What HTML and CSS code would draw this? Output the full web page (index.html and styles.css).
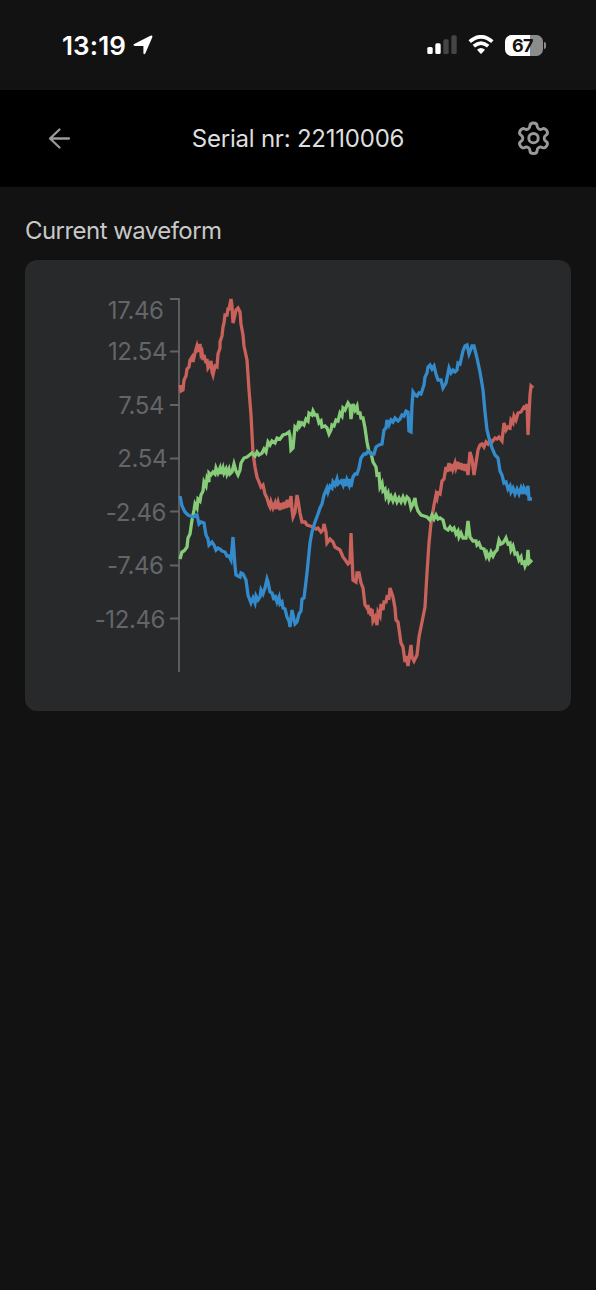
FILE: index.html
```
<!DOCTYPE html>
<html lang="en">
<head>
    <meta charset="UTF-8">
    <meta name="viewport" content="width=device-width, initial-scale=1.0">
    <title>Current waveform</title>
    <link rel="stylesheet" href="styles.css">
</head>
<body>
    <div class="status-bar">
        <div class="status-left">
            <span class="time">13:19</span>
            <svg class="location" width="20" height="20" viewBox="0 0 20 20">
                <path d="M1.2 9 L17.4 .8 Q20 0 19.2 2.4 L12.4 18.3 Q11 20.4 10.4 18.2 V11 H2 Q-.7 10.5 1.2 9 Z"/>
            </svg>
        </div>
        <div class="status-right">
            <svg class="signal" width="31" height="20" viewBox="0 0 31 20">
                <rect x="0.3" y="12" width="5.4" height="7" rx="1.6"/>
                <rect x="8.3" y="8.3" width="5.4" height="10.7" rx="1.6"/>
                <rect class="off" x="16.3" y="4.3" width="5.4" height="14.7" rx="1.6"/>
                <rect class="off" x="24.3" y="0.3" width="5.4" height="18.7" rx="1.6"/>
            </svg>
            <svg class="wifi" width="26" height="20" viewBox="0 0 26 20">
                <path class="arc" d="M1.7 6.6 Q13 -3 24.3 6.6"/>
                <path class="arc" d="M5.8 11.2 Q13 5 20.2 11.2"/>
                <path d="M9 14.7 Q13 11.3 17 14.7 L13.6 18.5 Q13 19.1 12.4 18.5 Z"/>
            </svg>
            <div class="battery"><span>67</span></div>
            <div class="battery-cap"></div>
        </div>
    </div>

    <div class="header">
        <svg class="back" width="24" height="24" viewBox="0 0 24 24">
            <path d="M22 11.5 H3 M12.5 2.5 L3 11.5 L12.5 20.5"/>
        </svg>
        <h1>Serial nr: 22110006</h1>
        <svg class="settings" width="34" height="36" viewBox="-16.5 -17.2 34 36">
            <path d="M-3.6 -12.2 C-3.6 -16.3 3.6 -16.3 3.6 -12.2
                C3.6 -9.6 6.51 -7.92 8.77 -9.22 C12.32 -11.27 15.92 -5.03 12.37 -2.98
                C10.11 -1.68 10.11 1.68 12.37 2.98 C15.92 5.03 12.32 11.27 8.77 9.22
                C6.51 7.92 3.6 9.6 3.6 12.2 C3.6 16.3 -3.6 16.3 -3.6 12.2
                C-3.6 9.6 -6.51 7.92 -8.77 9.22 C-12.32 11.27 -15.92 5.03 -12.37 2.98
                C-10.11 1.68 -10.11 -1.68 -12.37 -2.98 C-15.92 -5.03 -12.32 -11.27 -8.77 -9.22
                C-6.51 -7.92 -3.6 -9.6 -3.6 -12.2 Z"/>
            <circle r="4.7"/>
        </svg>
    </div>

    <div class="content">
        <h2>Current waveform</h2>
        <div class="card">
            <svg class="chart" viewBox="25 260 546 451">
                <path class="axis" d="M170 299 H179 V672 M170 351.5 H179 M170 405 H179 M170 458.5 H179 M170 511.5 H179 M170 565.5 H179 M170 618.5 H179"/>
                <g class="labels">
                    <text x="163.5" y="318.5">17.46</text>
                    <text x="167" y="360">12.54</text>
                    <text x="164" y="413.5">7.54</text>
                    <text x="167" y="467">2.54</text>
                    <text x="166" y="520.5">-2.46</text>
                    <text x="163.5" y="574">-7.46</text>
                    <text x="165" y="627.5">-12.46</text>
                </g>
                <polyline class="line red" points="180,385 181,391 183,390 184,380 186,376 187,369 189,367 190,360 192,357 193,362 195,353 197,346 198,350 199,349 200,344 201,354 202,352 203,360 204,355 206,363 207,359 208,368 210,365 211,361 212,372 213,375 215,366 217,367 218,354 220,348 220,342 222,336 223,327 224,323 225,315 227,315 228,309 229,309 231,299 232,306 233,323 235,315 236,310 238,308 240,312 241,324 243,335 244,346 247,360 249,390 251,415 253,453 255,467 257,477 259,482 261,487 263,485 265,494 267,498 269,505 270,507 271,502 273,508 275,503 276,509 278,502 280,510 281,503 283,509 284,502 286,508 287,500 289,507 291,496 292,510 293,517 295,512 297,495 298,500 300,513 302,522 305,522 307,525 310,526 313,527 316,529 318,528 321,532 323,530 324,524 326,532 327,543 330,539 333,542 335,547 340,550 343,557 346,561 348,564 350,562 351,533 353,580 356,582 357,573 359,573 361,583 363,588 365,605 367,608 368,605 369,614 370,608 371,616 372,609 373,621 375,617 377,625 378,612 380,616 381,604 383,610 384,602 386,602 387,597 389,598 390,588 393,597 395,608 396,620 398,622 401,643 403,647 405,662 406,656 408,666 411,645 412,657 414,661 417,655 419,637 422,622 425,607 427,573 429,543 431,523 434,505 436,495 437,498 438,493 440,494 442,481 444,479 446,467 447,472 449,463 450,471 452,464 453,469 455,463 456,468 458,462 459,469 461,463 462,470 464,464 465,471 466,464 468,475 470,452 472,459 474,475 476,463 478,450 480,445 482,444 484,447 486,442 488,444 490,440 492,442 495,438 497,439 499,437 502,441 504,423 506,430 508,427 510,428 511,420 513,423 514,416 516,420 518,413 521,412 524,407 526,408 527,404 528,435 530,395 531,386 533,388"/>
                <polyline class="line green" points="180,559 182,552 184,551 187,547 188,538 190,534 192,520 194,510 195,504 197,508 198,499 200,501 201,495 203,491 204,482 206,486 207,478 209,482 209,473 211,475 213,472 215,474 216,468 218,473 220,468 221,474 223,468 224,473 226,469 227,474 229,469 230,474 232,472 234,464 236,471 238,475 240,470 241,463 244,458 247,457 252,453 255,456 257,452 259,455 262,453 264,449 266,452 268,442 270,445 272,441 275,443 277,438 280,439 283,435 286,434 289,432 290,436 291,450 293,448 295,427 297,429 299,421 300,426 302,423 304,425 306,419 308,421 309,413 312,415 313,411 315,415 317,415 319,423 321,421 322,427 325,426 327,428 329,434 331,430 332,425 334,426 336,420 338,421 340,413 342,416 343,408 345,410 348,403 350,406 351,419 353,404 355,410 357,406 358,413 360,413 361,418 363,418 365,428 367,442 369,452 371,453 373,462 376,467 377,475 379,474 380,487 382,483 383,491 385,489 386,497 388,493 389,500 391,496 393,501 395,496 397,502 399,498 401,502 403,497 405,502 407,497 409,499 411,508 413,504 415,498 416,505 418,511 421,515 424,516 427,517 430,520 432,515 434,519 436,515 438,519 440,518 443,520 445,528 448,530 450,527 452,530 454,528 456,534 458,531 459,537 461,533 463,538 466,538 468,521 470,537 473,541 476,541 477,545 479,543 481,548 484,549 486,556 487,553 489,558 491,552 493,556 495,552 497,550 499,540 501,544 503,543 505,540 506,538 508,544 510,543 511,550 513,546 515,554 517,553 519,560 521,557 522,563 524,562 525,566 527,561 528,550 529,563 532,560"/>
                <polyline class="line blue" points="180,496 182,506 185,512 188,515 193,517 196,515 197,515 199,524 201,522 204,523 206,535 208,539 209,545 212,542 214,545 216,550 218,548 220,549 222,551 225,552 227,556 229,556 231,560 233,537 235,566 236,575 240,577 241,573 243,574 246,580 248,595 251,603 253,598 255,603 256,596 258,600 260,597 261,590 263,594 265,588 267,579 268,582 270,592 272,593 274,600 275,595 277,602 279,597 280,604 282,602 283,608 285,609 287,617 289,621 290,627 292,610 295,624 297,622 299,614 301,611 302,599 304,598 307,573 310,543 312,532 315,522 318,514 320,508 322,504 324,495 327,488 328,492 330,486 332,488 333,482 335,485 337,479 338,484 341,481 343,485 344,479 346,486 347,480 349,485 350,479 351,487 353,477 355,474 357,474 359,468 361,458 364,454 366,454 368,451 371,454 374,454 376,447 379,445 382,444 384,430 386,428 387,420 389,425 391,420 393,422 395,418 398,421 400,419 402,415 404,416 406,411 408,412 409,431 411,432 412,405 413,392 415,395 417,396 419,393 421,394 424,385 425,377 427,373 428,367 430,365 432,369 434,366 436,374 438,380 441,380 443,388 446,383 449,368 451,373 453,370 455,372 457,370 458,363 460,364 463,351 465,346 467,345 469,354 472,346 474,346 477,358 480,372 483,390 485,412 487,430 489,438 492,448 495,455 498,458 500,471 502,475 504,483 506,482 508,489 510,486 511,492 513,488 515,494 517,489 519,494 521,488 523,494 524,488 526,492 528,486 529,499 532,499"/>
            </svg>
        </div>
    </div>
</body>
</html>
```
FILE: styles.css
```
body {
    margin: 0;
    min-height: 1290px;
    background-color: #121212;
    color: #c8c8c8;
    font-family: Inter, "Liberation Sans", sans-serif;
}
h1, h2 {
    margin: 0;
    font-weight: 400;
}
.status-bar {
    display: flex;
    justify-content: space-between;
    align-items: center;
    box-sizing: border-box;
    height: 90px;
    padding: 0 50px 0 62px;
    color: white;
    fill: white;
}
.status-left, .status-right {
    display: flex;
    align-items: center;
}
.status-left {
    gap: 7px;
}
.time {
    font-size: 26px;
    font-weight: 600;
    letter-spacing: 0.1px;
}
.signal {
    margin-right: 10px;
}
.signal .off {
    fill: #454545;
}
.wifi {
    margin-right: 11px;
}
.wifi .arc {
    fill: none;
    stroke: white;
    stroke-width: 3.7;
}
.battery {
    box-sizing: border-box;
    width: 38px;
    height: 21px;
    padding-right: 3px;
    border-radius: 6.5px;
    background: linear-gradient(to right, white 67%, #8c8c8c 67%);
    color: #121212;
    font-size: 18px;
    font-weight: 700;
    line-height: 21px;
    text-align: center;
    letter-spacing: -0.5px;
}
.battery-cap {
    width: 2px;
    height: 7px;
    margin-left: 1px;
    border-radius: 0 3px 3px 0;
    background-color: #8c8c8c;
}
.header {
    display: flex;
    justify-content: space-between;
    align-items: center;
    box-sizing: border-box;
    height: 97px;
    padding: 0 45px 0 47px;
    background-color: black;
}
.header h1 {
    margin-left: 8px;
    color: #dedede;
    font-size: 24px;
    letter-spacing: -0.22px;
}
.back, .settings {
    fill: none;
    stroke: #999;
    stroke-width: 2.3;
    stroke-linecap: round;
    stroke-linejoin: round;
}
.settings {
    stroke-width: 2.9;
}
.content {
    padding: 28px 25px 0;
}
.content h2 {
    height: 45px;
    font-size: 24px;
    line-height: 31px;
    letter-spacing: -0.55px;
}
.card {
    height: 451px;
    border-radius: 12px;
    background-color: #28292b;
}
.chart {
    display: block;
    width: 100%;
    height: 100%;
}
.axis {
    fill: none;
    stroke: #626365;
    stroke-width: 1.8;
}
.labels {
    fill: #646568;
    font-size: 24px;
    letter-spacing: -0.4px;
    text-anchor: end;
}
.line {
    fill: none;
    stroke-width: 3.3;
    stroke-linejoin: miter;
}
.red {
    stroke: #c8625b;
}
.green {
    stroke: #87cc78;
}
.blue {
    stroke: #338bcb;
}
```
